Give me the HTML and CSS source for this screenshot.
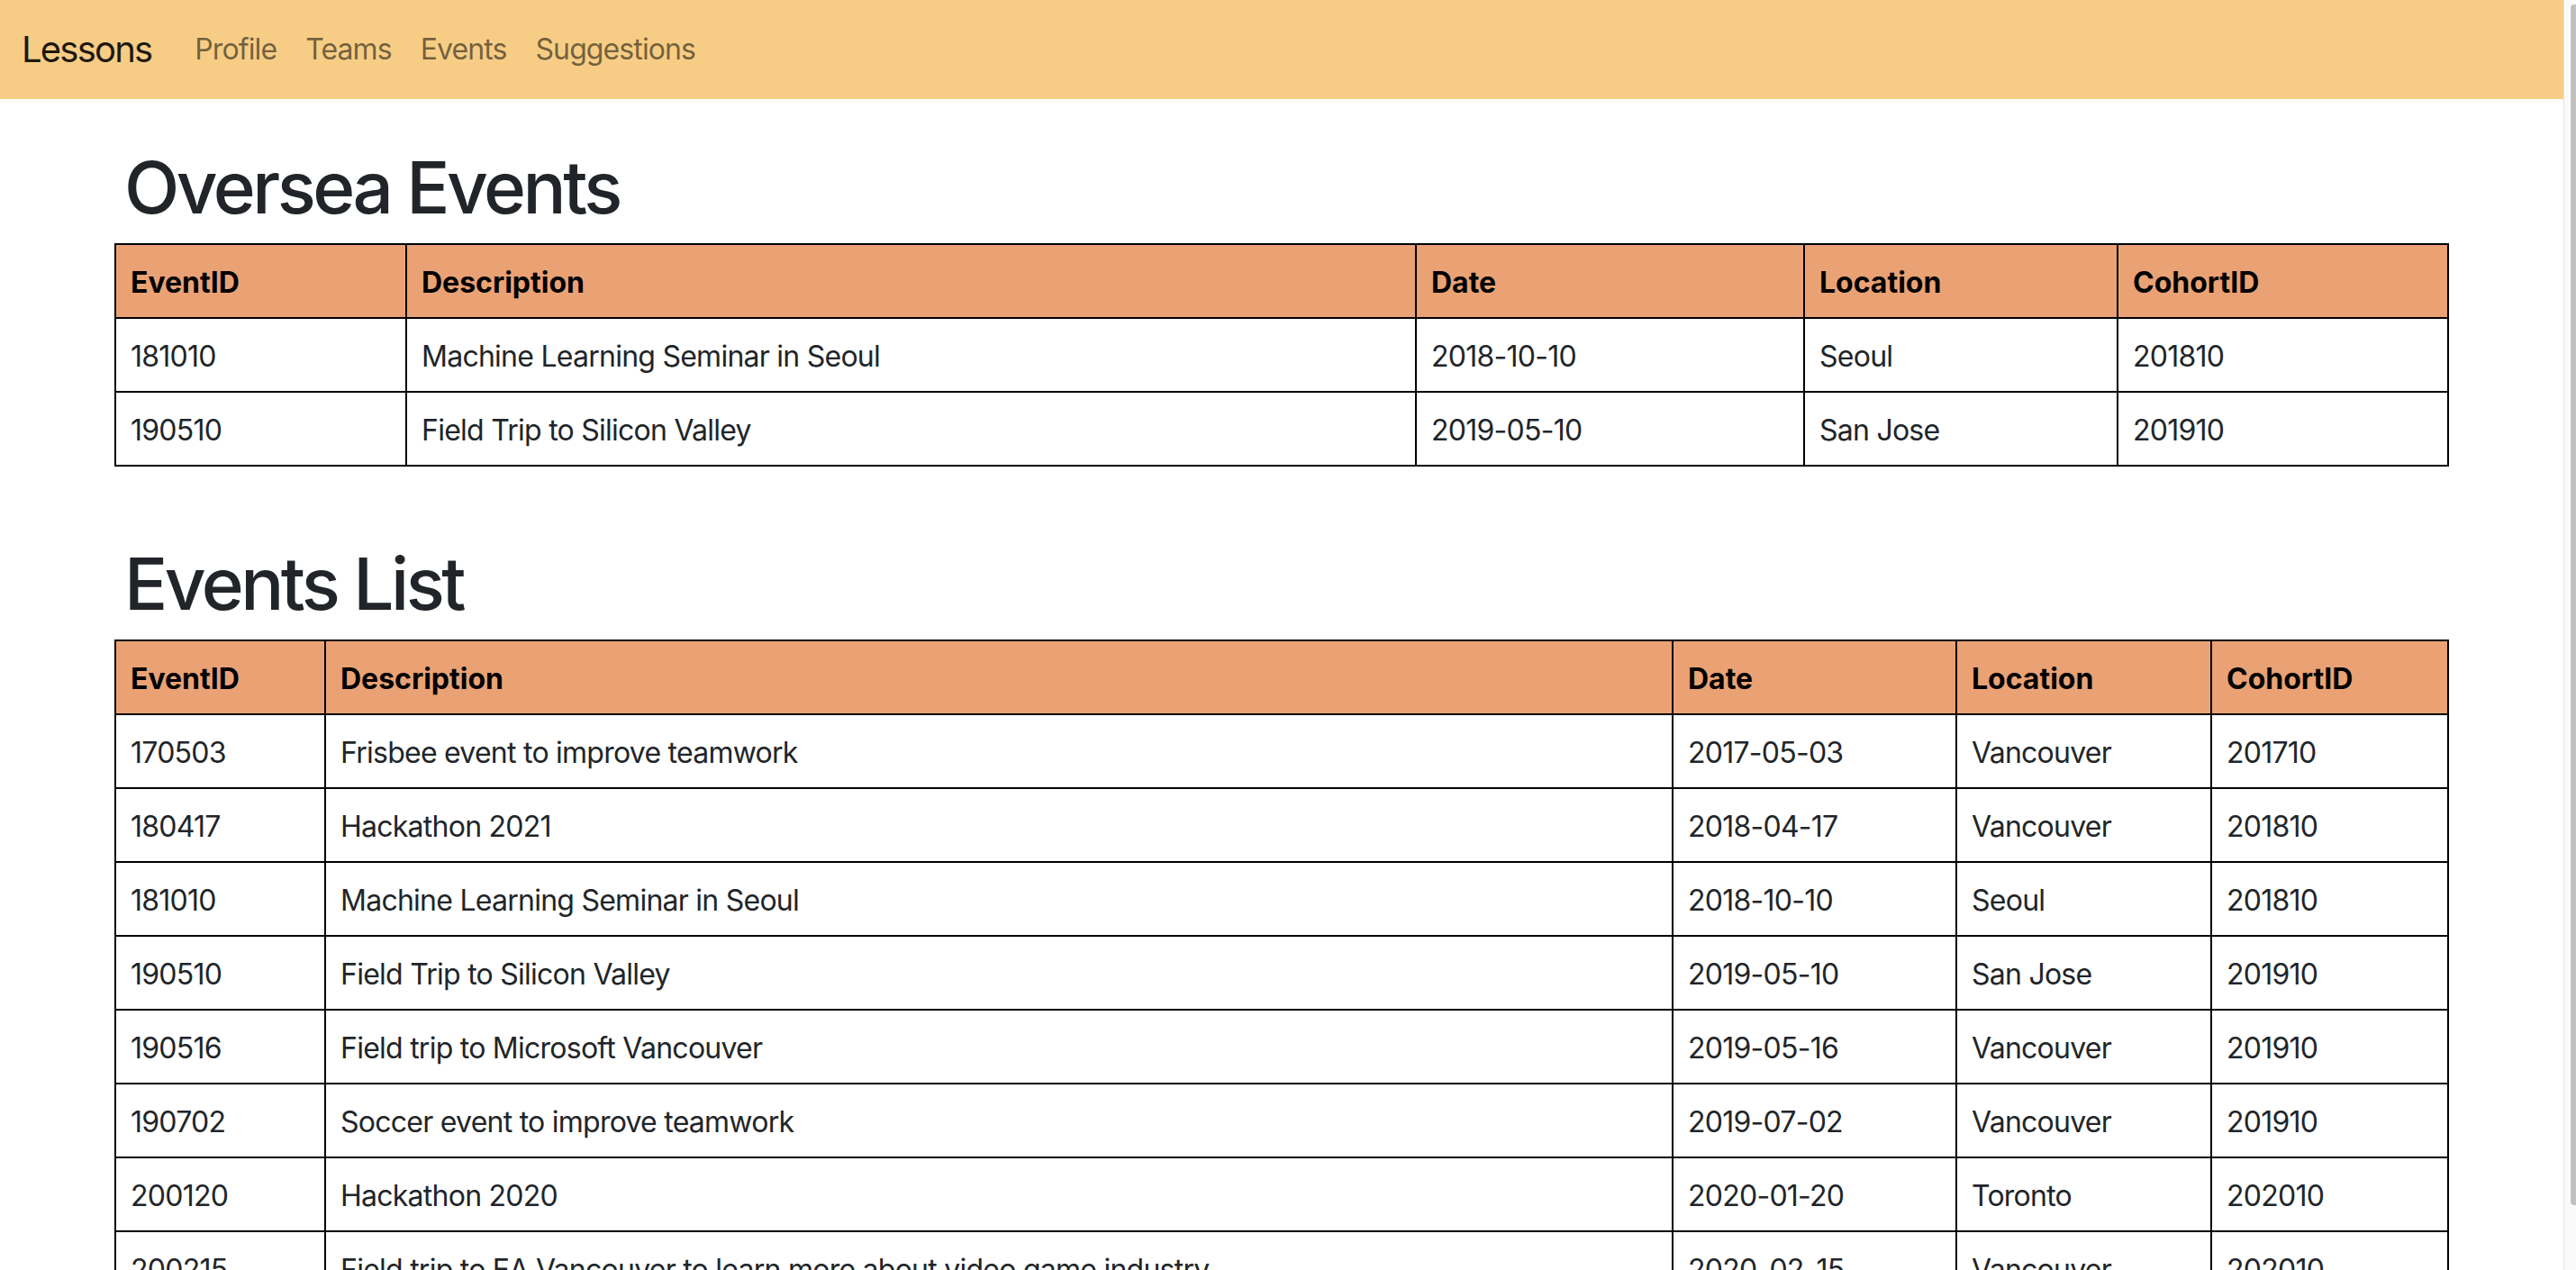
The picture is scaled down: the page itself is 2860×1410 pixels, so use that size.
FILE: index.html
```html
<!DOCTYPE html>
<html lang="en">
<head>
<meta charset="utf-8">
<title>Events</title>
<link rel="stylesheet" href="styles.css">
</head>
<body>
<div class="page">
  <nav class="navbar">
    <a class="brand" href="#">Lessons</a>
    <ul class="nav">
      <li><a class="nav-link" href="#">Profile</a></li>
      <li><a class="nav-link" href="#">Teams</a></li>
      <li><a class="nav-link" href="#">Events</a></li>
      <li><a class="nav-link" href="#">Suggestions</a></li>
    </ul>
  </nav>
  <main class="container">
    <section class="section">
      <h1 class="title">Oversea Events</h1>
      <table class="events oversea">
        <colgroup><col class="c1"><col class="c2"><col class="c3"><col class="c4"><col class="c5"></colgroup>
        <thead>
          <tr><th>EventID</th><th>Description</th><th>Date</th><th>Location</th><th>CohortID</th></tr>
        </thead>
        <tbody>
          <tr><td>181010</td><td>Machine Learning Seminar in Seoul</td><td>2018-10-10</td><td>Seoul</td><td>201810</td></tr>
          <tr><td>190510</td><td>Field Trip to Silicon Valley</td><td>2019-05-10</td><td>San Jose</td><td>201910</td></tr>
        </tbody>
      </table>
    </section>
    <section class="section">
      <h1 class="title">Events List</h1>
      <table class="events all">
        <colgroup><col class="c1"><col class="c2"><col class="c3"><col class="c4"><col class="c5"></colgroup>
        <thead>
          <tr><th>EventID</th><th>Description</th><th>Date</th><th>Location</th><th>CohortID</th></tr>
        </thead>
        <tbody>
          <tr><td>170503</td><td>Frisbee event to improve teamwork</td><td>2017-05-03</td><td>Vancouver</td><td>201710</td></tr>
          <tr><td>180417</td><td>Hackathon 2021</td><td>2018-04-17</td><td>Vancouver</td><td>201810</td></tr>
          <tr><td>181010</td><td>Machine Learning Seminar in Seoul</td><td>2018-10-10</td><td>Seoul</td><td>201810</td></tr>
          <tr><td>190510</td><td>Field Trip to Silicon Valley</td><td>2019-05-10</td><td>San Jose</td><td>201910</td></tr>
          <tr><td>190516</td><td>Field trip to Microsoft Vancouver</td><td>2019-05-16</td><td>Vancouver</td><td>201910</td></tr>
          <tr><td>190702</td><td>Soccer event to improve teamwork</td><td>2019-07-02</td><td>Vancouver</td><td>201910</td></tr>
          <tr><td>200120</td><td>Hackathon 2020</td><td>2020-01-20</td><td>Toronto</td><td>202010</td></tr>
          <tr><td>200215</td><td>Field trip to EA Vancouver to learn more about video game industry</td><td>2020-02-15</td><td>Vancouver</td><td>202010</td></tr>
        </tbody>
      </table>
    </section>
  </main>
</div>
<div class="scrollbar"><div class="thumb"></div></div>
</body>
</html>
```

FILE: styles.css
```css
html {
  overflow: hidden;
}
body {
  margin: 0;
  font-family: Inter, "Noto Sans", sans-serif;
  font-size: 32px;
  line-height: 1.5;
  color: #212529;
  background: #fff;
}
.page {
  margin-right: 14px;
}
.navbar {
  display: flex;
  align-items: center;
  height: 110px;
  padding: 0 24px;
  background: #f7cd85;
  box-sizing: border-box;
}
.brand {
  font-size: 40px;
  line-height: 60px;
  letter-spacing: -1.8px;
  color: rgba(0, 0, 0, 0.9);
  text-decoration: none;
  margin-right: 32px;
}
.nav {
  display: flex;
  list-style: none;
  margin: 0;
  padding: 0;
}
.nav-link {
  display: block;
  padding: 0 16px;
  font-size: 32px;
  line-height: 48px;
  letter-spacing: -0.9px;
  color: rgba(0, 0, 0, 0.55);
  text-decoration: none;
}
.container {
  max-width: 2640px;
  margin: 0 auto;
  padding: 0 24px;
  box-sizing: border-box;
}
.section {
  padding-top: 48px;
}
.title {
  margin: 2px 0 14px;
  padding-left: 11px;
  font-size: 80px;
  font-weight: 500;
  line-height: 1.2;
  color: #212529;
  letter-spacing: -3.5px;
}
.events {
  width: 100%;
  table-layout: fixed;
  border-collapse: collapse;
  margin-bottom: 32px;
}
.events th,
.events td {
  border: 2px solid #000;
  padding: 18px 16px 14px;
  text-align: left;
  vertical-align: top;
  white-space: nowrap;
  overflow: hidden;
}
.events td {
  letter-spacing: -0.75px;
}
.events th {
  background: #eaa274;
  color: #000;
  font-weight: 700;
}
.oversea .c1 { width: 323px; }
.oversea .c2 { width: 1121px; }
.oversea .c3 { width: 431px; }
.oversea .c4 { width: 348px; }
.oversea .c5 { width: 367px; }
.all .c1 { width: 233px; }
.all .c2 { width: 1496px; }
.all .c3 { width: 315px; }
.all .c4 { width: 283px; }
.all .c5 { width: 263px; }
.scrollbar {
  position: fixed;
  top: 0;
  right: 0;
  width: 14px;
  height: 100%;
  background: #fafafa;
  border-left: 1px solid #e6e6e6;
  box-sizing: border-box;
}
.thumb {
  position: absolute;
  top: 5px;
  bottom: 72px;
  left: 7px;
  right: 0;
  background: #c1c1c1;
  border-radius: 4px 0 0 4px;
}
```
